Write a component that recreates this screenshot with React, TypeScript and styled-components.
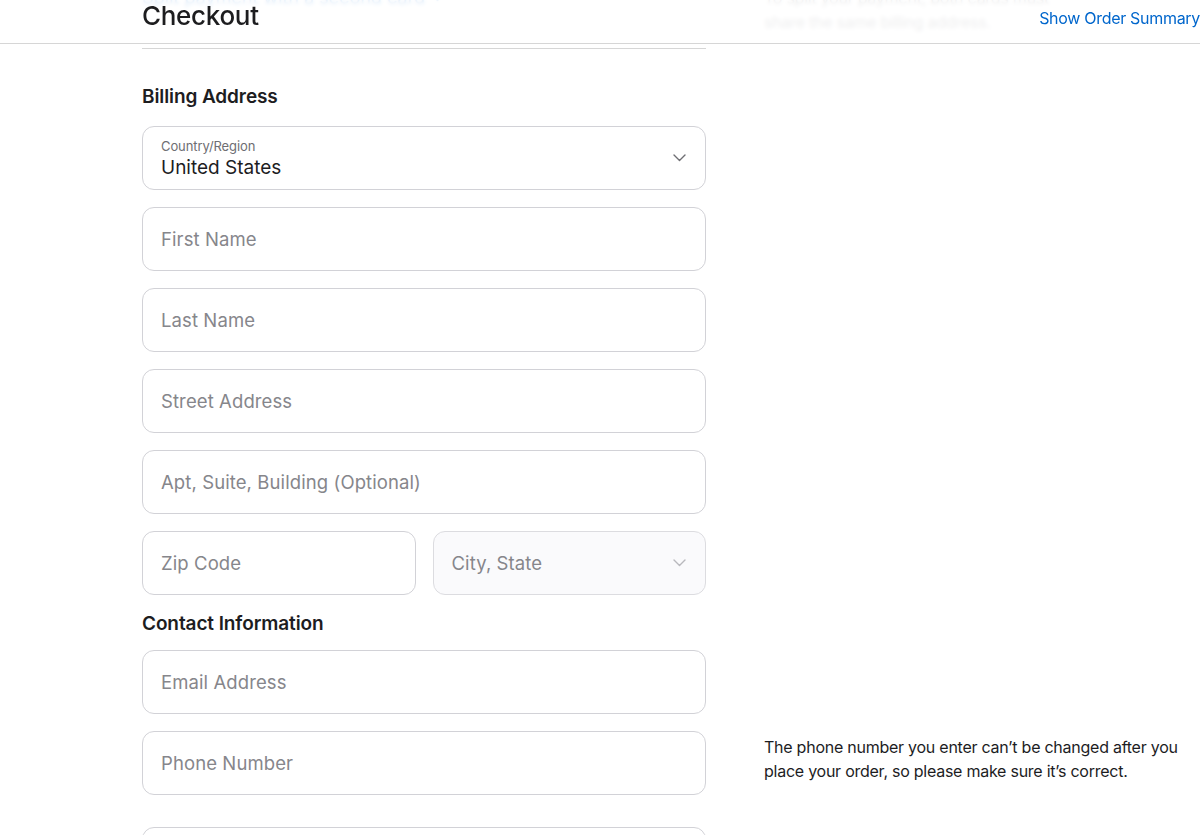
import React from 'react'
import styled, { createGlobalStyle } from 'styled-components'

const GlobalStyle = createGlobalStyle`
  html, body {
    margin: 0;
    padding: 0;
    background: #ffffff;
    overflow: hidden;
  }
  body {
    font-family: Inter, "Noto Sans", "Liberation Sans", sans-serif;
    color: #1d1d1f;
    -webkit-font-smoothing: antialiased;
  }
`

const Header = styled.header`
  position: fixed;
  top: 0;
  left: 0;
  right: 0;
  height: 43px;
  display: flex;
  justify-content: space-between;
  align-items: flex-start;
  padding-left: 142px;
  background: rgba(255, 255, 255, 0.88);
  backdrop-filter: blur(2px);
  border-bottom: 1px solid #d6d6d6;
  z-index: 10;
`

const Title = styled.h1`
  margin: 0;
  font-size: 26px;
  line-height: 32px;
  font-weight: 500;
  letter-spacing: -0.3px;
  color: #1d1d1f;
`

const SummaryLink = styled.a`
  margin-top: 6px;
  font-size: 16px;
  line-height: 24px;
  color: #0066cc;
  text-decoration: none;
  white-space: nowrap;
  letter-spacing: -0.3px;
`

const Main = styled.main`
  margin-top: -14px;
  padding-left: 142px;
  display: flex;
  flex-direction: column;
`

const Row = styled.div<{ $gap?: number }>`
  display: grid;
  grid-template-columns: 564px 1fr;
  column-gap: 58px;
  margin-top: ${({ $gap }) => $gap ?? 0}px;
`

const SplitLink = styled.a`
  display: inline-flex;
  align-items: center;
  gap: 6px;
  font-size: 18px;
  line-height: 24px;
  color: #0066cc;
  text-decoration: none;
`

const AsideText = styled.p<{ $muted?: boolean; $top?: number }>`
  margin: 0;
  align-self: ${({ $top }) => ($top === undefined ? 'center' : 'start')};
  padding-top: ${({ $top }) => $top ?? 0}px;
  font-size: 16px;
  line-height: 24px;
  color: ${({ $muted }) => ($muted ? '#6e6e73' : '#1d1d1f')};
  max-width: 436px;
  letter-spacing: -0.25px;
`

const Divider = styled.hr`
  width: 564px;
  margin: 14px 0 0;
  border: none;
  border-top: 1px solid #d6d6d6;
`

const SectionTitle = styled.h2<{ $top: number; $bottom: number }>`
  margin: ${({ $top }) => $top}px 0 ${({ $bottom }) => $bottom}px;
  font-size: 19px;
  line-height: 24px;
  font-weight: 600;
  letter-spacing: -0.1px;
  color: #1d1d1f;
`

const Fields = styled.div`
  display: flex;
  flex-direction: column;
  gap: 17px;
`

const Pair = styled.div`
  display: grid;
  grid-template-columns: 1fr 1fr;
  column-gap: 17px;
`

const Field = styled.div<{ $disabled?: boolean }>`
  box-sizing: border-box;
  height: 64px;
  display: flex;
  align-items: center;
  justify-content: space-between;
  padding: 0 19px 0 18px;
  border: 1px solid ${({ $disabled }) => ($disabled ? '#dcdce0' : '#d2d2d7')};
  border-radius: 12px;
  background: ${({ $disabled }) => ($disabled ? '#fafafc' : '#ffffff')};
`

const Placeholder = styled.span`
  font-size: 18.5px;
  line-height: 24px;
  color: #86868b;
  letter-spacing: 0.1px;
`

const SelectText = styled.div`
  display: flex;
  flex-direction: column;
  gap: 2px;
  padding-top: 2px;
`

const SelectLabel = styled.span`
  font-size: 13px;
  line-height: 16px;
  color: #6e6e73;
  letter-spacing: -0.1px;
`

const SelectValue = styled.span`
  font-size: 19px;
  line-height: 24px;
  color: #1d1d1f;
  letter-spacing: 0;
`

const Chevron = ({ color = '#6e6e73' }: { color?: string }) => (
  <svg width="13" height="8" viewBox="0 0 13 8" fill="none">
    <polyline points="1,1 6.5,6.5 12,1" stroke={color} strokeWidth="1.4" strokeLinecap="round" strokeLinejoin="round" />
  </svg>
)

const NextField = styled(Field)`
  margin-top: 32px;
`

const TextField = ({ label }: { label: string }) => (
  <Field>
    <Placeholder>{label}</Placeholder>
  </Field>
)

const App: React.FC = () => {
  return (
    <>
      <GlobalStyle />
      <Header>
        <Title>Checkout</Title>
        <SummaryLink href="#">Show Order Summary</SummaryLink>
      </Header>
      <Main>
        <Row>
          <div>
            <SplitLink href="#">
              Split payment with a second card <Chevron color="#0066cc" />
            </SplitLink>
          </div>
          <AsideText $muted>
            To split your payment, both cards must
            <br />
            share the same billing address.
          </AsideText>
        </Row>
        <Divider />

        <SectionTitle $top={36} $bottom={17}>Billing Address</SectionTitle>
        <Row>
          <Fields>
            <Field>
              <SelectText>
                <SelectLabel>Country/Region</SelectLabel>
                <SelectValue>United States</SelectValue>
              </SelectText>
              <Chevron />
            </Field>
            <TextField label="First Name" />
            <TextField label="Last Name" />
            <TextField label="Street Address" />
            <TextField label="Apt, Suite, Building (Optional)" />
            <Pair>
              <TextField label="Zip Code" />
              <Field $disabled>
                <Placeholder>City, State</Placeholder>
                <Chevron color="#b8b8bd" />
              </Field>
            </Pair>
          </Fields>
        </Row>

        <SectionTitle $top={17} $bottom={14}>Contact Information</SectionTitle>
        <Row>
          <TextField label="Email Address" />
        </Row>
        <Row $gap={17}>
          <TextField label="Phone Number" />
          <AsideText $top={4}>
            The phone number you enter can’t be changed after you place your order, so please make sure it’s correct.
          </AsideText>
        </Row>
        <Row>
          <NextField>
            <Placeholder>&nbsp;</Placeholder>
          </NextField>
        </Row>
      </Main>
    </>
  )
}

export default App
